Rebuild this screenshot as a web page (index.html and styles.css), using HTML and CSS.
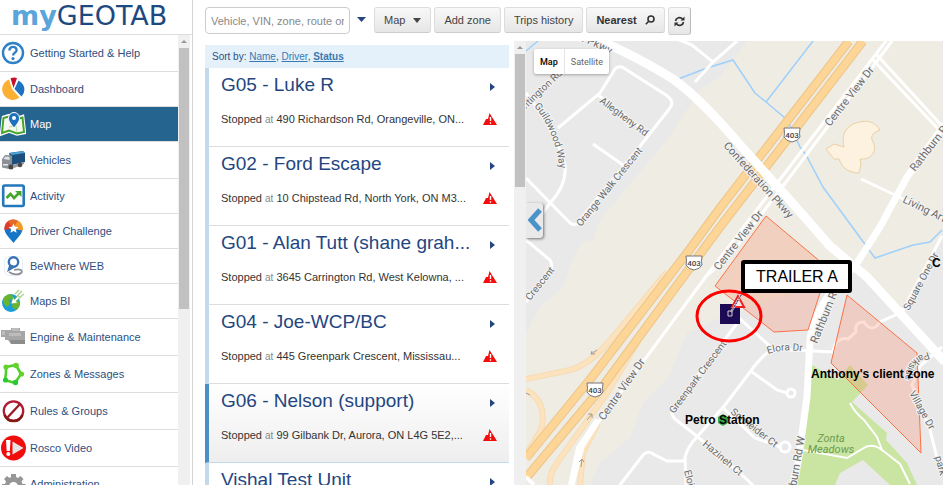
FILE: index.html
```html
<!DOCTYPE html>
<html lang="en">
<head>
    <meta charset="utf-8">
    <title>MyGeotab - Map</title>
    <link rel="stylesheet" href="styles.css">
</head>
<body>
    <aside class="sidebar">
        <div class="logo"><b>my</b>GEOTAB</div>
        <div class="menu-wrap">
            <nav class="menu">
                <a href="#" class="tall">
                    <svg viewBox="0 0 26 26"><circle cx="13" cy="13" r="10" fill="#fff" stroke="#2f80c6" stroke-width="2.4"/><path d="M9.4 10.5c0-5 7.4-4.6 7.2-.3-.1 2.4-3.5 2.5-3.5 5.3" fill="none" stroke="#2f80c6" stroke-width="2.4"/><circle cx="13" cy="18.6" r="1.6" fill="#2f80c6"/></svg>
                    Getting Started &amp; Help
                </a>
                <a href="#">
                    <svg viewBox="0 0 26 26"><path d="M12 13 9 3.4A10.6 10.6 0 1 0 19.500 21.500z" fill="#fbb034"/><path d="M13.500 12 10.500 2.200q4-1.400 6.500 0z" fill="#c8102e"/><path d="M14.500 13 18.500 4.500c7 4 7.500 11 3 16z" fill="#1f73be"/></svg>
                    Dashboard
                </a>
                <a href="#" class="active">
                    <svg viewBox="0 0 26 26"><path d="M3 6 9 4l8 3 6-2 2 17-8 1.500-8-3-8 3z" fill="#fff" stroke="#fff" stroke-width="2.500"/><path d="M3.500 7 9 5.500l8 2.500 5.500-1.500 1.500 14.500-7 1.500-8-3-7 2.500z" fill="#f4f8ef" stroke="#48a52c" stroke-width="2"/><path d="m9 16 7-1 1 6" fill="none" stroke="#b7dca5"/><path d="M14 17C9 11 8.500 9 8.500 7a5.500 5.500 0 0 1 11 0c0 2-.5 4-5.500 10z" fill="#1d72bd" stroke="#fff"/><circle cx="14" cy="7" r="2" fill="#fff"/></svg>
                    Map
                </a>
                <a href="#" class="tall">
                    <svg viewBox="0 0 26 26"><path d="m9 6 14-2 2 2v9l-13 3z" fill="#1d4f7d"/><path d="m9 6 14-2 2 2-13 2z" fill="#4f9fd0"/><path d="M2 12 5 8l7 .500V20l-3 2-7-1.500z" fill="#8c9196"/><path d="m3.500 12 2-2.500 4 .5v3z" fill="#d9e4ea"/><path d="M3 17h5v1.500H3z" fill="#e8e8e8"/><path d="m13 18 11-3v2l-10 4z" fill="#9a9a9a"/><circle cx="11" cy="20" r="2.500" fill="#484848"/><circle cx="20" cy="18" r="2.300" fill="#484848"/></svg>
                    Vehicles
                </a>
                <a href="#">
                    <svg viewBox="0 0 26 26"><rect x="3.200" y="2.500" width="20.500" height="20.500" rx="1.500" fill="#fff" stroke="#2577bc" stroke-width="2.600"/><path d="m6.500 15 4-4 3.500 4 5-5" fill="none" stroke="#44a62c" stroke-width="2.600"/><path d="M15 8h6.500v6z" fill="#44a62c"/></svg>
                    Activity
                </a>
                <a href="#">
                    <svg viewBox="0 0 26 26"><path d="M13.500 25C8 18 4 15 4.500 9.500h18C23 15 19 18 13.500 25z" fill="#1675c5"/><path d="M4.500 12A9.200 9.200 0 0 1 9 2.500l4 8z" fill="#e23a2a"/><path d="M8 3a9.500 9.500 0 0 1 10.500 0L13 11z" fill="#e06a28"/><path d="M18 2.700c4 2 5.500 6 4.700 9.800L13 11z" fill="#f59a26"/><path d="m13.500 5.500 1.400 3.200 3.500.3-2.600 2.300.8 3.500-3.100-1.800-3.100 1.800.8-3.500L8.600 9l3.500-.3z" fill="#fff"/></svg>
                    Driver Challenge
                </a>
                <a href="#">
                    <svg viewBox="0 0 26 26"><rect x="4.500" y="3.500" width="18" height="19" rx="5" fill="#fff" stroke="#e3edf6"/><path d="M14 17c7-2 9 1 7 3s-8 2-12-1" fill="none" stroke="#8c9094" stroke-width="1.800"/><circle cx="13.500" cy="9" r="4.700" fill="#fff" stroke="#3b73b5" stroke-width="2.400"/><path d="m9.500 11-2.500 8 9-5z" fill="#3b73b5"/></svg>
                    BeWhere WEB
                </a>
                <a href="#">
                    <svg viewBox="0 0 26 26"><circle cx="11" cy="15" r="9" fill="#189fdb"/><path d="M3 11c2-4 6-5 9-5l1 4-4 2 1 4-3 3-3-3zM13 15l6-2c2 4 0 7-3 9l-4-3z" fill="#6ab42d"/><path d="m11 16 2-7 1.500 2.500 3.500-4 2 2-4 4 2.500 1.500z" fill="#fff" stroke="#6ab42d" stroke-width=".8"/><path d="m15 6 4-4M17 8l5-5M19 10l5-4" stroke="#a7d38a" stroke-width="1.200"/></svg>
                    Maps BI
                </a>
                <a href="#" class="tall">
                    <svg viewBox="0 0 26 26"><path d="M1 6h10V4h9v3h5v13H11l-3-4H5v-3H1z" fill="#a6a6a6"/><path d="M12 4h7v3h-7zM2 7h3v4H2zM9 9h12v3H9z" fill="#bcbcbc"/><path d="M10 16h15v4H11z" fill="#8c8c8c"/></svg>
                    Engine &amp; Maintenance
                </a>
                <a href="#" class="tall">
                    <svg viewBox="0 0 26 26"><path d="m6 6 10-2 5 9-6 9-10-3 1-7z" fill="none" stroke="#4fcf2c" stroke-width="2.600"/><g fill="#65d22c"><circle cx="6" cy="6" r="2.600"/><circle cx="16" cy="4.500" r="2.800"/><circle cx="21.500" cy="13" r="2.600"/></g><g fill="#25c93a"><circle cx="15.500" cy="21.500" r="2.700"/><circle cx="5.500" cy="19" r="2.600"/></g></svg>
                    Zones &amp; Messages
                </a>
                <a href="#" class="tall">
                    <svg viewBox="0 0 26 26"><circle cx="13.500" cy="13" r="9.700" fill="none" stroke="#b01c33" stroke-width="2.300"/><path d="M4.500 17a9.700 9.700 0 0 0 18 0" fill="none" stroke="#801a12" stroke-width="2.300"/><path d="m7 20 13-14" stroke="#9a1a22" stroke-width="2.300"/></svg>
                    Rules &amp; Groups
                </a>
                <a href="#" class="tall">
                    <svg viewBox="0 0 26 26"><circle cx="13.500" cy="13" r="12.500" fill="#f20d0d"/><path d="M6 5h4.500L9.800 16H6.700z" fill="#fff"/><circle cx="8.300" cy="19" r="2" fill="#fff"/><path d="M12.500 6.500 23.500 13l-11 6.500z" fill="#e4e4e4"/></svg>
                    Rosco Video
                </a>
                <a href="#">
                    <svg viewBox="0 0 26 26"><path d="M11 3h5v3l2 1 2.500-2 3 3-2 2.500 1 2.500h3v5h-3l-1 2 2 3-3 3-3-2-2 1v2h-5v-2l-2-1-3 2-3-3 2-3-1-2H2v-5h3l1-2.500L4 8l3-3 2.500 2 1.500-1z" fill="#969696"/><circle cx="13.500" cy="15.500" r="4.500" fill="#fff"/></svg>
                    Administration
                </a>
            </nav>
            <div class="scrollbar"><i></i><span class="thumb menu-thumb"></span></div>
        </div>
    </aside>

    <main class="content">
        <div class="toolbar">
            <input type="text" class="search" aria-label="Search" placeholder="Vehicle, VIN, zone, route or group">
            <button class="caret" aria-label="Filter"></button>
            <button class="btn">Map <i class="down"></i></button>
            <button class="btn">Add zone</button>
            <button class="btn">Trips history</button>
            <button class="btn bold">Nearest <svg width="10" height="10" viewBox="0 0 10 10" fill="none" stroke="#333" stroke-width="1.600"><circle cx="6" cy="4" r="3"/><path d="M4 6 .8 9.200"/></svg></button>
            <button class="btn refresh" aria-label="Refresh"><svg width="11" height="11" viewBox="0 0 11 11"><path d="M1.500 5a4 4 0 0 1 7-2M9.500 6a4 4 0 0 1-7 2" fill="none" stroke="#333" stroke-width="1.700"/><path d="M10.500.5v4h-4zM.5 10.500v-4h4z" fill="#333"/></svg></button>
        </div>

        <div class="panes">
            <section class="vehicles">
                <div class="sort">Sort by: <a href="#">Name</a>, <a href="#">Driver</a>, <a href="#"><b>Status</b></a></div>
                <article class="vehicle">
                    <h2>G05 - Luke R</h2><i class="go"></i>
                    <p>Stopped <small>at</small> 490 Richardson Rd, Orangeville, ON...</p>
                    <svg class="alert" viewBox="0 0 14 12"><path d="M6.500 0 14 12H0L3 6l2 0z" fill="#f40b0b"/><path d="M7.500 4v4M7.500 9.200v1.500" stroke="#fff" stroke-width="1.400"/></svg>
                </article>
                <article class="vehicle">
                    <h2>G02 - Ford Escape</h2><i class="go"></i>
                    <p>Stopped <small>at</small> 10 Chipstead Rd, North York, ON M3...</p>
                    <svg class="alert" viewBox="0 0 14 12"><path d="M6.500 0 14 12H0L3 6l2 0z" fill="#f40b0b"/><path d="M7.500 4v4M7.500 9.200v1.500" stroke="#fff" stroke-width="1.400"/></svg>
                </article>
                <article class="vehicle">
                    <h2>G01 - Alan Tutt (shane grah...</h2><i class="go"></i>
                    <p>Stopped <small>at</small> 3645 Carrington Rd, West Kelowna, ...</p>
                    <svg class="alert" viewBox="0 0 14 12"><path d="M6.500 0 14 12H0L3 6l2 0z" fill="#f40b0b"/><path d="M7.500 4v4M7.500 9.200v1.500" stroke="#fff" stroke-width="1.400"/></svg>
                </article>
                <article class="vehicle">
                    <h2>G04 - Joe-WCP/BC</h2><i class="go"></i>
                    <p>Stopped <small>at</small> 445 Greenpark Crescent, Mississau...</p>
                    <svg class="alert" viewBox="0 0 14 12"><path d="M6.500 0 14 12H0L3 6l2 0z" fill="#f40b0b"/><path d="M7.500 4v4M7.500 9.200v1.500" stroke="#fff" stroke-width="1.400"/></svg>
                </article>
                <article class="vehicle selected">
                    <h2>G06 - Nelson (support)</h2><i class="go"></i>
                    <p>Stopped <small>at</small> 99 Gilbank Dr, Aurora, ON L4G 5E2,...</p>
                    <svg class="alert" viewBox="0 0 14 12"><path d="M6.500 0 14 12H0L3 6l2 0z" fill="#f40b0b"/><path d="M7.500 4v4M7.500 9.200v1.500" stroke="#fff" stroke-width="1.400"/></svg>
                </article>
                <article class="vehicle">
                    <h2>Vishal Test Unit</h2><i class="go"></i>
                </article>
            </section>
            <div class="scrollbar list-scroll"><i></i><span class="thumb list-thumb"></span></div>

            <section class="map">
                <svg class="tiles" viewBox="526 41 417 444" preserveAspectRatio="xMinYMin slice">
                    <defs>
                        <path id="guildwood" d="M534 106Q556 132 560 172"/>
                        <path id="parkside" d="M928 352C908 358 900 372 909 400"/>
                        <path id="elora" d="M768 354Q784 348 808 352"/>
                        <path id="confed" d="M516 28Q584 34 624 64"/>
                        <g id="shield"><path d="M-8-6H8Q7 0 8 3 6 7 0 8-6 7-8 3-7 0-8-6z" fill="#fff" stroke="#777"/><text y="4" text-anchor="middle">403</text></g>
                    </defs>
                    <!-- land -->
                    <path class="land" d="M747 41 720 77 700 90 667 140 600 220 593 240 582 242 573 258 563 287 540 307 526 333V485H590L600 463 630 437 643 403 667 380 687 333 715 320 763 303 835 280 860 272 902 312 942 236V41z"/>
                    <path class="park" d="M812 365 838 380 850 365 868 385 852 402 887 433 886 440 907 463 917 485H890L863 460 840 473 835 485H794L808 400z"/>
                    <path class="arena" d="M860 122c8-2 15 0 20 8-7 3-9 5-8 10 6 9 1 20-12 19l1 6-2 8c-10 0-17-5-20-14l-5 0-8-10 8-5 10 3c-3-12 2-23 16-25z"/>
                    <!-- water -->
                    <g class="water">
                        <path d="M526 51 538 41M633 57 647 63M673 81 707 68 733 60 755 93 766 102 785 118 791 127 800 147 806 155 823 187 867 247 875 258 913 245 930 242 942 230M813 41 766 102"/>
                    </g>
                    <!-- local streets -->
                    <g class="street">
                        <path d="M737 41 713 62 695 82M677 39 692 45 713 62"/>
                        <path d="M558 128 600 93 615 69Q617 66 622 67L666 95Q675 101 670 108L637 150 578 222Q575 227 570 223L526 178M598 95 650 135M593 144 623 165"/>
                        <path d="M526 93Q555 130 565 165 567 185 550 203L533 227M526 240 550 260Q554 268 549 273L526 302"/>
                        <path d="M738 322 672 410Q671 415 675 419L698 437 740 473 760 492M620 485 643 455Q648 450 653 454L667 461H685M686 485 685 457Q688 446 697 437L725 405 750 372Q762 355 773 349L738 317M773 349 833 352M752 372 777 390 787 393M722 407 755 438 781 447"/>
                        <circle cx="791" cy="393" r="4"/><circle cx="785" cy="447" r="5"/>
                        <path d="M902 312 880 322Q872 334 864 322 854 322 856 332L848 339Q836 336 833 352M942 347 920 366 912 385 930 430 940 470M861 179 895 195 942 218M942 236 902 312M942 133 872 59M942 126 877 55"/>
                    </g>
                    <path class="trail" d="M850 403Q856 414 864 420L877 437 882 450 900 464 910 484M882 450Q872 442 862 449L847 458 803 450"/>
                    <!-- highway 403 and ramps -->
                    <g class="ramp-edge"><path d="M667 272 613 337Q590 365 570 370L526 379M526 390Q548 402 541 430L526 455M643 333 607 393 557 463Q549 474 550 485M598 423 583 453 580 485"/></g>
                    <g class="ramp"><path d="M667 272 613 337Q590 365 570 370L526 379M526 390Q548 402 541 430L526 455M643 333 607 393 557 463Q549 474 550 485M598 423 583 453 580 485"/></g>
                    <g class="road"><path d="M886 41 778 182 707 275 600 420 583 447 573 485" stroke-width="3"/><path d="M892 41 780 190 725 262 707 275" stroke-width="3"/><path d="M598 420 579 448 571 485" stroke-width="6"/></g>
                    <g class="hwy-edge"><path d="M849 41 720 208 690 249 592 377 526 458M863 41 720 227 703 250 603 386 526 478"/></g>
                    <g class="hwy"><path d="M849 41 720 208 690 249 592 377 526 458M863 41 720 227 703 250 603 386 526 478"/></g>
                    <path class="road" stroke-width="9" d="M590 36Q640 58 673 79 700 98 740 145L787 197 830 246 867 277 945 362"/>
                    <path class="road" stroke-width="7" d="M945 124 907 177 880 227 857 263 830 293Q812 320 810 340L807 397 798 463 792 487"/>
                    <path class="road" stroke-width="4" d="M526 477 534 485"/>
                    <g class="arrows"><path d="m597 350-6 4m0 0 1-3m-1 3 4 0M587 420l5-6m0 0-4 0m4 0 0 4M581 467l1-8m0 0-3 3m3-3 2 3M526 393l4 2"/></g>
                    <!-- zones -->
                    <path class="zone" d="M766 216 828 268 808 330 774 332 715 286z"/>
                    <path class="zone" d="M847 295 917 353 921 453 831 363z"/>
                    <!-- street names -->
                    <g class="name">
                        <text class="big" transform="translate(830 127) rotate(-52)">Centre View Dr</text>
                        <text class="big" transform="translate(719 271) rotate(-52)">Centre View Dr</text>
                        <text class="big" transform="translate(604 421) rotate(-55)">Centre View Dr</text>
                        <text class="big" transform="translate(723 146) rotate(48)">Confederation Pkwy</text>
                        <text class="big"><textPath href="#confed">Confederation Pkwy</textPath></text>
                        <text transform="translate(599 102) rotate(37)">Allegheny Rd</text>
                        <text><textPath href="#guildwood">Guildwood Way</textPath></text>
                        <text transform="translate(581 227) rotate(-51)">Orange Walk Crescent</text>
                        <text transform="translate(522 113) rotate(-44)">untington Rd</text>
                        <text class="big" transform="translate(915 172) rotate(-52)">Rathburn Rd</text>
                        <text class="big" transform="translate(902 202) rotate(26)">Living Arts Dr</text>
                        <text class="big" transform="translate(817 344) rotate(-68)">Rathburn Rd</text>
                        <text><textPath href="#elora">Elora Dr</textPath></text>
                        <text transform="translate(909 311) rotate(-62)">Square One Dr</text>
                        <text><textPath href="#parkside">Parkside</textPath></text>
                        <text transform="translate(909 393) rotate(61)">Village Dr</text>
                        <text transform="translate(730 413) rotate(38)">Schneider Ct</text>
                        <text transform="translate(702 445) rotate(40)">Hazineh Ct</text>
                        <text transform="translate(674 414) rotate(-53)">Greenpark Crescent</text>
                        <text transform="translate(684 471) rotate(75)">Eloise</text>
                        <text transform="translate(530 301) rotate(-51)">Crescent</text>
                        <text class="big" transform="translate(805 437) rotate(-80)" text-anchor="end">Rathburn Rd W</text>
                        <text transform="translate(935 457) rotate(75)">park</text>
                    </g>
                    <g class="park-name"><text x="831" y="442">Zonta</text><text x="831" y="453">Meadows</text></g>
                    <g class="shield">
                        <use href="#shield" x="792" y="134"/><use href="#shield" x="694" y="262"/><use href="#shield" x="595" y="389"/>
                    </g>
                    <!-- markers -->
                    <path d="m723 414 5 3v6l-5 3-5-3v-6z" fill="#3aa845"/>
                    <g class="zone-name"><text x="685" y="424">Petro Station</text><text x="811" y="378">Anthony's client zone</text><text x="932" y="267">C</text></g>
                    <path d="M720 304h20v20h-20z" fill="#1c0a55"/>
                    <path d="m738 296 6 11h-12z" fill="#f4eaea" stroke="#e22" stroke-width="2"/>
                    <path d="m731 312 12-20" stroke="#ddd" stroke-width="2"/><path d="m731 312 12-20" stroke="#1c0a55" stroke-dasharray="2 1"/>
                    <path d="M728 311h4v5h-4z" fill="none" stroke="#ccc"/>
                    <ellipse cx="729" cy="316" rx="32" ry="25" fill="none" stroke="#f00" stroke-width="3"/>
                    <rect x="743" y="262" width="107" height="29" rx="1" fill="#fff" stroke="#000" stroke-width="4"/>
                    <text class="callout" x="797" y="282">TRAILER A</text>
                </svg>
                <div class="map-type"><button class="on">Map</button><button>Satellite</button></div>
                <button class="collapse" aria-label="Collapse"><svg width="14" height="24" viewBox="0 0 14 24"><path d="M12 2 3 12l9 10" fill="none" stroke="#4a93c9" stroke-width="5"/></svg></button>
            </section>
        </div>
    </main>
</body>
</html>
```

FILE: styles.css
```css
* {
    box-sizing: border-box;
}
body {
    display: flex;
    height: 100vh;
    margin: 0;
    overflow: hidden;
    background: #fff;
    font-family: "Liberation Sans", Arial, sans-serif;
    font-size: 11px;
    color: #333;
}
button {
    font-family: inherit;
    font-size: 11px;
    color: #444;
    cursor: pointer;
}
.sidebar {
    display: flex;
    flex-direction: column;
    flex: none;
    width: 193px;
    border-right: 1px solid #d4d4d4;
}
.logo {
    flex: none;
    height: 35px;
    padding-left: 11px;
    border-bottom: 1px solid #ddd;
    font-family: "DejaVu Sans", sans-serif;
    font-size: 27px;
    line-height: 31px;
    color: #1c4a80;
}
.logo b {
    color: #5aa5da;
}
.menu-wrap {
    display: flex;
    flex: 1;
    min-height: 0;
    padding-right: 2px;
}
.menu {
    flex: 1;
    overflow: hidden;
}
.menu a {
    display: flex;
    align-items: center;
    gap: 4px;
    height: 35px;
    border-bottom: 1px solid #ddd;
    color: #2d4f7f;
    text-decoration: none;
}
.menu a.tall {
    height: 37px;
}
.menu a.active {
    background: #25648f;
    color: #fff;
}
.menu svg {
    flex: none;
    width: 26px;
    height: 26px;
}
.scrollbar {
    display: flex;
    flex-direction: column;
    align-items: center;
    flex: none;
    width: 12px;
    background: #f0f0f0;
}
.scrollbar i {
    margin: 5px 0;
    border: 3px solid transparent;
    border-top: 0;
    border-bottom: 3px solid #999;
}
.thumb {
    width: 10px;
    background: #c1c1c1;
}
.menu-thumb {
    height: 58%;
}
.list-thumb {
    height: 30%;
}
.content {
    display: flex;
    flex-direction: column;
    flex: 1;
    min-width: 0;
    padding-left: 12px;
}
.toolbar {
    display: flex;
    align-items: flex-start;
    gap: 3px;
    flex: none;
    height: 41px;
    padding-top: 7px;
}
.search {
    width: 145px;
    height: 27px;
    padding: 0 5px;
    border: 1px solid #ccc;
    border-radius: 4px;
    font-family: inherit;
    font-size: 11px;
}
.search::placeholder {
    color: #888;
}
.caret {
    width: 9px;
    height: 5px;
    margin: 10px 5px 0 4px;
    padding: 0;
    border: 0;
    background: #24467f;
    clip-path: polygon(0 0, 100% 0, 50% 100%);
}
.btn {
    display: flex;
    align-items: center;
    gap: 8px;
    height: 26px;
    padding: 0 9px;
    border: 1px solid #ddd;
    border-bottom-color: #ccc;
    border-radius: 3px;
    background: linear-gradient(#f8f8f8, #e6e6e6);
}
.btn.bold {
    font-weight: bold;
    color: #333;
}
.btn.refresh {
    height: 28px;
    padding: 0 5px;
    border-right-color: #bbb;
}
.down {
    border: 4px solid transparent;
    border-top: 5px solid #444;
    border-bottom: 0;
}
.panes {
    display: flex;
    flex: 1;
    min-height: 0;
}
.vehicles {
    width: 304px;
    flex: none;
    padding-top: 4px;
    overflow: hidden;
}
.sort {
    height: 23px;
    padding-left: 7px;
    background: #e4f1fa;
    font-size: 10px;
    line-height: 23px;
    color: #2d4f7f;
}
.sort a {
    color: #3a78b0;
}
.vehicle {
    display: grid;
    grid-template-columns: 1fr 18px;
    grid-template-rows: 34px 34px;
    align-items: center;
    height: 79px;
    padding: 0 8px 0 12px;
    border-left: 4px solid #c3daec;
    border-bottom: 1px solid #ddd;
}
.vehicle.selected {
    border-left-color: #4a90c4;
    border-bottom-color: #c3daec;
    background: linear-gradient(#fff, #eee);
}
.vehicle h2 {
    margin: 0;
    font-size: 19px;
    font-weight: normal;
    white-space: nowrap;
    color: #24467f;
}
.vehicle p {
    margin: 0;
    white-space: nowrap;
}
.vehicle small {
    font-size: 10px;
    color: #888;
}
.go {
    justify-self: center;
    margin-top: 4px;
    border: 4px solid transparent;
    border-left: 5px solid #24467f;
    border-right: 0;
}
.alert {
    width: 14px;
    height: 12px;
}
.list-scroll {
    margin-left: 5px;
}
.map {
    position: relative;
    flex: 1;
    min-width: 0;
    overflow: hidden;
    background: #e9e9e9;
}
.tiles {
    display: block;
    width: 100%;
    height: 100%;
    font-family: Roboto, sans-serif;
}
.land {
    fill: #eeece3;
}
.park {
    fill: #c9e5a1;
}
.arena {
    fill: #fdf1e0;
    stroke: #ecd0a4;
}
.water, .street, .trail, .road, .ramp, .ramp-edge, .hwy, .hwy-edge {
    fill: none;
    stroke: #fff;
}
.water {
    stroke: #9fd0fb;
    stroke-width: 1.5;
}
.street {
    stroke-width: 3;
}
.trail {
    stroke-width: 2;
}
.ramp-edge {
    stroke: #f5dcb5;
    stroke-width: 6;
}
.ramp {
    stroke: #fde3bd;
    stroke-width: 4;
}
.hwy-edge {
    stroke: #ecc488;
    stroke-width: 9;
}
.hwy {
    stroke: #fdd597;
    stroke-width: 7;
}
.arrows {
    fill: none;
    stroke: #a59a91;
}
.zone {
    fill: #ff7850;
    fill-opacity: 0.24;
    stroke: #fa7248;
}
.name text {
    fill: #6b6b6b;
    font-size: 10px;
    paint-order: stroke;
    stroke: #f4f4f4;
    stroke-width: 2px;
}
.name .big {
    font-size: 11px;
}
.park-name {
    fill: #6b9c4d;
    font-size: 11px;
    font-style: italic;
    text-anchor: middle;
}
.tiles #shield text {
    fill: #444;
    font-size: 8px;
    font-weight: 500;
}
.zone-name {
    fill: #000;
    font: bold 12px "Liberation Sans", Arial, sans-serif;
}
.callout {
    font: 16px "Liberation Sans", Arial, sans-serif;
    text-anchor: middle;
}
.map-type {
    position: absolute;
    top: 8px;
    left: 8px;
    display: flex;
    height: 25px;
    border-radius: 2px;
    background: #fff;
    box-shadow: 0 1px 3px rgba(0, 0, 0, 0.3);
}
.map-type button {
    padding: 0 6px;
    border: 0;
    background: none;
    font-family: Roboto, sans-serif;
    font-size: 9px;
    color: #666;
}
.map-type .on {
    border-right: 1px solid #e5e5e5;
    font-weight: 500;
    color: #000;
}
.collapse {
    position: absolute;
    top: 162px;
    left: 0;
    width: 17px;
    height: 35px;
    padding: 0;
    border: 0;
    border-radius: 0 3px 3px 0;
    background: #e9e9e9;
    box-shadow: 1px 1px 3px rgba(0, 0, 0, 0.5);
}
```
